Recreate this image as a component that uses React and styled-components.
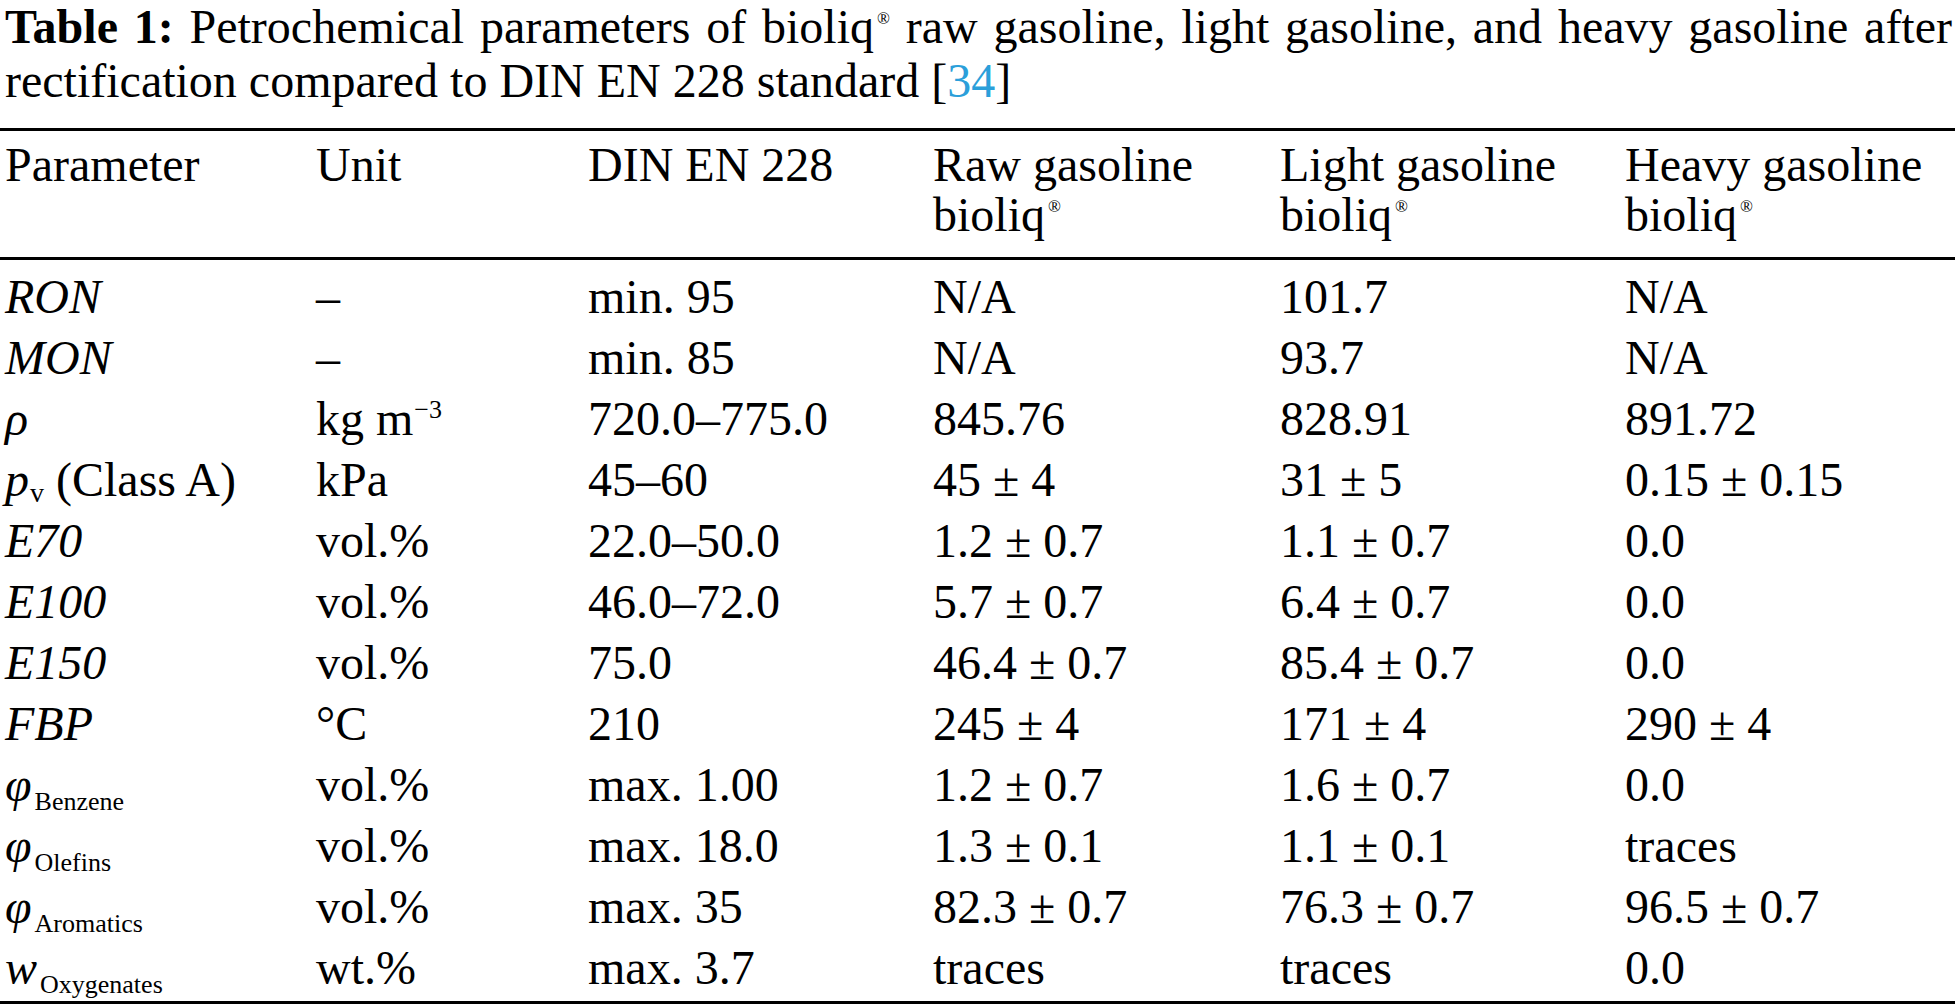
import React from "react";
import styled, { createGlobalStyle } from "styled-components";

const GlobalStyle = createGlobalStyle`
  html, body {
    margin: 0;
    padding: 0;
    background: #fff;
  }
  body {
    font-family: "Liberation Serif", "Times New Roman", serif;
    color: #000;
  }
`;

const columns = "311px 272px 345px 347px 345px 1fr";

const Page = styled.div`
  width: 1955px;
  font-size: 48px;
`;

const Caption = styled.div`
  display: flex;
  flex-direction: column;
  line-height: 54px;
`;

const CaptionLine = styled.div`
  text-align: ${(p) => (p.$justify ? "justify" : "left")};
  text-align-last: ${(p) => (p.$justify ? "justify" : "left")};
  padding: 0 3px 0 5px;
  white-space: ${(p) => (p.$justify ? "normal" : "nowrap")};

  b {
    font-weight: 700;
  }
`;

const Ref = styled.span`
  color: #2b9fda;
`;

const Table = styled.div`
  margin-top: 20px;
  border-top: 3px solid #000;
  border-bottom: 3px solid #000;
`;

const HeadRow = styled.div`
  display: grid;
  grid-template-columns: ${columns};
  line-height: 50px;
  padding: 9px 0 17px;
  border-bottom: 3px solid #000;
`;

const Body = styled.div`
  padding: 6px 0 3px;
`;

const Row = styled.div`
  display: grid;
  grid-template-columns: ${columns};
  height: 61px;
  line-height: 61px;
`;

const Cell = styled.div`
  padding-left: 5px;
  white-space: nowrap;
`;

const Var = styled.i`
  font-style: italic;
`;

const Sub = styled.span`
  font-size: ${(p) => (p.$drop ? "28px" : "26px")};
  vertical-align: ${(p) => -(p.$drop ?? 9)}px;
  line-height: 0;
  margin-left: ${(p) => (p.$drop ? "1px" : "3px")};
`;

const Sup = styled.span`
  font-size: 26px;
  vertical-align: 17px;
  line-height: 0;
  margin-left: 1px;
`;

const Reg = styled.span`
  font-size: 17px;
  vertical-align: 19px;
  line-height: 0;
  margin-left: 3px;
`;

function Bioliq() {
  return (
    <>
      bioliq<Reg>®</Reg>
    </>
  );
}

function Phi({ sub }) {
  return (
    <>
      <Var>φ</Var>
      <Sub>{sub}</Sub>
    </>
  );
}

const rows = [
  [<Var>RON</Var>, "–", "min. 95", "N/A", "101.7", "N/A"],
  [<Var>MON</Var>, "–", "min. 85", "N/A", "93.7", "N/A"],
  [
    <Var>ρ</Var>,
    <>
      kg m<Sup>−3</Sup>
    </>,
    "720.0–775.0",
    "845.76",
    "828.91",
    "891.72",
  ],
  [
    <>
      <Var>p</Var>
      <Sub $drop={6}>v</Sub> (Class A)
    </>,
    "kPa",
    "45–60",
    "45 ± 4",
    "31 ± 5",
    "0.15 ± 0.15",
  ],
  [<Var>E70</Var>, "vol.%", "22.0–50.0", "1.2 ± 0.7", "1.1 ± 0.7", "0.0"],
  [<Var>E100</Var>, "vol.%", "46.0–72.0", "5.7 ± 0.7", "6.4 ± 0.7", "0.0"],
  [<Var>E150</Var>, "vol.%", "75.0", "46.4 ± 0.7", "85.4 ± 0.7", "0.0"],
  [<Var>FBP</Var>, "°C", "210", "245 ± 4", "171 ± 4", "290 ± 4"],
  [<Phi sub="Benzene" />, "vol.%", "max. 1.00", "1.2 ± 0.7", "1.6 ± 0.7", "0.0"],
  [<Phi sub="Olefins" />, "vol.%", "max. 18.0", "1.3 ± 0.1", "1.1 ± 0.1", "traces"],
  [<Phi sub="Aromatics" />, "vol.%", "max. 35", "82.3 ± 0.7", "76.3 ± 0.7", "96.5 ± 0.7"],
  [
    <>
      <Var>w</Var>
      <Sub>Oxygenates</Sub>
    </>,
    "wt.%",
    "max. 3.7",
    "traces",
    "traces",
    "0.0",
  ],
];

export default function App() {
  return (
    <Page>
      <GlobalStyle />
      <Caption>
        <CaptionLine $justify>
          <b>Table 1:</b> Petrochemical parameters of <Bioliq /> raw gasoline,
          light gasoline, and heavy gasoline after
        </CaptionLine>
        <CaptionLine>
          rectification compared to DIN EN 228 standard [<Ref>34</Ref>]
        </CaptionLine>
      </Caption>

      <Table>
        <HeadRow>
          <Cell>Parameter</Cell>
          <Cell>Unit</Cell>
          <Cell>DIN EN 228</Cell>
          <Cell>
            Raw gasoline
            <br />
            <Bioliq />
          </Cell>
          <Cell>
            Light gasoline
            <br />
            <Bioliq />
          </Cell>
          <Cell>
            Heavy gasoline
            <br />
            <Bioliq />
          </Cell>
        </HeadRow>
        <Body>
          {rows.map((row, i) => (
            <Row key={i}>
              {row.map((cell, j) => (
                <Cell key={j}>{cell}</Cell>
              ))}
            </Row>
          ))}
        </Body>
      </Table>
    </Page>
  );
}
